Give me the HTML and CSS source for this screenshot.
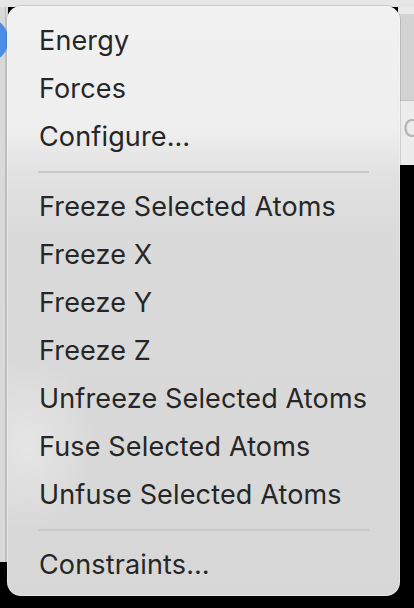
FILE: index.html
```html
<!DOCTYPE html>
<html>
<head>
<meta charset="utf-8">
<link rel="stylesheet" href="styles.css">
</head>
<body>
<span class="behind">C</span>
<div class="menu">
  <div class="item">Energy</div>
  <div class="item">Forces</div>
  <div class="item">Configure…</div>
  <div class="sep"></div>
  <div class="item">Freeze Selected Atoms</div>
  <div class="item">Freeze X</div>
  <div class="item">Freeze Y</div>
  <div class="item">Freeze Z</div>
  <div class="item">Unfreeze Selected Atoms</div>
  <div class="item">Fuse Selected Atoms</div>
  <div class="item">Unfuse Selected Atoms</div>
  <div class="sep"></div>
  <div class="item">Constraints…</div>
</div>
</body>
</html>
```
FILE: styles.css
```css
html, body {
  margin: 0;
  padding: 0;
}
body {
  width: 414px;
  height: 608px;
  overflow: hidden;
  position: relative;
  font-family: Inter, "Noto Sans", sans-serif;
  background:
    radial-gradient(circle at -14px 40px, #4d8de8 0 22px, transparent 23px),
    linear-gradient(#e6e6e6, #e6e6e6) no-repeat 0 0 / 414px 7px,
    linear-gradient(to right, #d9d9d9 0 5px, #bdbdbd 5px 6px, #d9d9d9 6px) no-repeat 0 0 / 8px 562px,
    linear-gradient(to bottom, #e9e9e9 0 14px, #d3d3d3 14px 100px, #c2c2c2 100px 101px, #ececec 101px 165px) no-repeat 398px 0 / 16px 165px,
    #000;
}
.behind {
  position: absolute;
  left: 403px;
  top: 114px;
  font-size: 24px;
  line-height: 30px;
  color: #b4b4b4;
}
.menu {
  position: absolute;
  left: 7px;
  top: 6px;
  width: 393px;
  height: 590px;
  box-sizing: border-box;
  padding: 11px 0 7px;
  border-radius: 14px;
  background:
    radial-gradient(ellipse 70px 90px at 20px 440px, rgba(255,255,255,0.35), transparent),
    linear-gradient(to bottom, #f1f1f1 0, #efefef 120px, #e2e2e2 165px, #dadada 230px, #d7d7d7 100%);
  box-shadow: 0 0 0 1px rgba(0,0,0,0.12), inset 0 0 0 1px rgba(255,255,255,0.35);
  color: #262626;
}
.item {
  height: 48px;
  line-height: 48px;
  padding-left: 32px;
  font-size: 27px;
  letter-spacing: 0.15px;
  white-space: nowrap;
}
.sep {
  height: 22px;
  display: flex;
  align-items: center;
  padding: 0 31px;
}
.sep::before {
  content: "";
  flex: 1;
  height: 2px;
  background: #c8c8c8;
}
```
